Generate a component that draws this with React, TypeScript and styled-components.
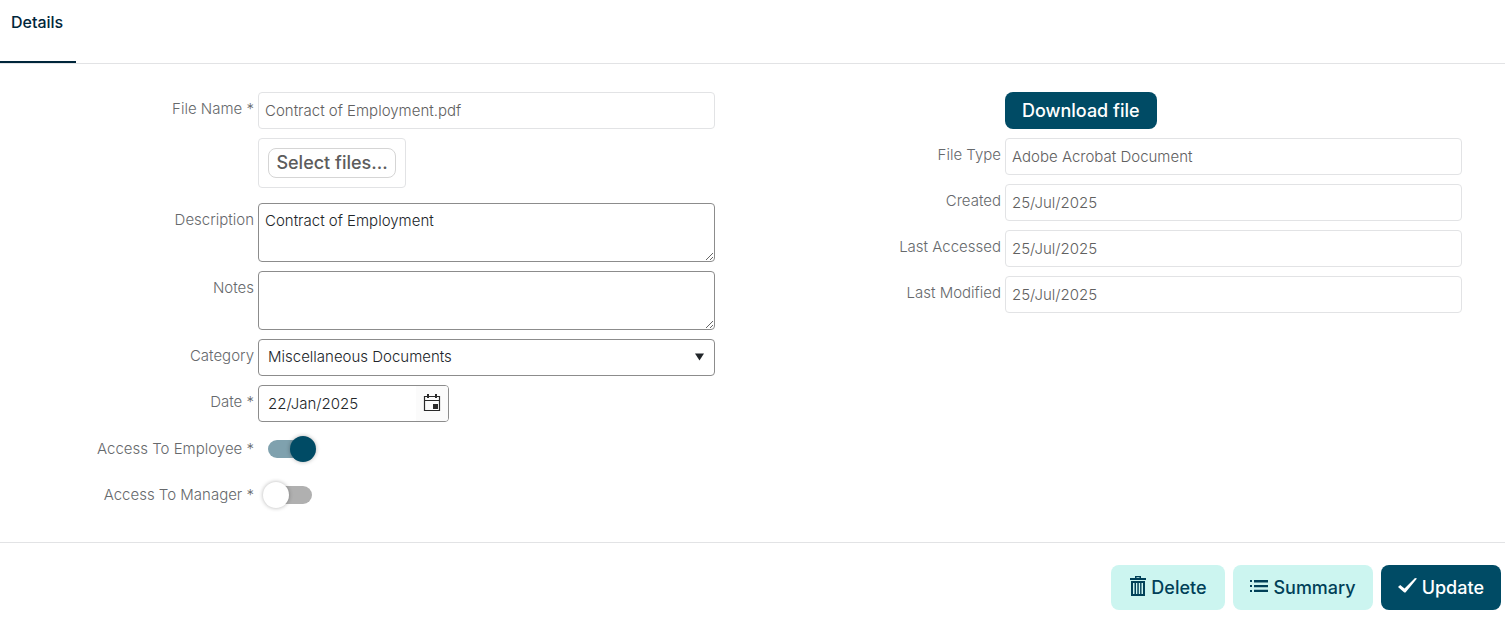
import React from "react";
import styled, { createGlobalStyle, css } from "styled-components";

const GlobalStyle = createGlobalStyle`
  *, *::before, *::after { box-sizing: border-box; }
  body {
    margin: 0;
    background: #fff;
    color: #212529;
    font-family: Inter, "Open Sans", sans-serif;
    font-size: 16px;
    font-weight: 300;
  }
  button, input, select, textarea { font: inherit; color: inherit; margin: 0; }
`;

const Page = styled.div`
  padding-right: 4px;
`;

const TabBar = styled.nav`
  display: flex;
  height: 64px;
  border-bottom: 1px solid #e2e3e5;
`;

const Tab = styled.a`
  width: 76px;
  padding: 12px 0 0 11px;
  border-bottom: 2px solid #00263a;
  color: #00263a;
  font-size: 16px;
  font-weight: 500;
  line-height: 20px;
  text-decoration: none;
`;

const Form = styled.form`
  margin: 0;
`;

const Columns = styled.div`
  display: grid;
  grid-template-columns: 1fr 1fr;
  align-items: start;
  padding: 28px 11px 27px 0;
`;

const Column = styled.div`
  display: flex;
  flex-direction: column;
  gap: 9px;
`;

const Row = styled.div`
  display: grid;
  grid-template-columns: 254fr 457fr;
  column-gap: 4px;
  align-items: start;
  min-height: 37px;
  padding-right: 32px;
`;

const Label = styled.label`
  padding-top: 6px;
  color: #66696c;
  font-size: 15px;
  line-height: 22px;
  text-align: right;
`;

const Control = styled.div`
  grid-column: 2;
  display: flex;
`;

const box = css`
  width: 100%;
  border: 1px solid #8c8c8c;
  border-radius: 4px;
  background: #fff;
  outline: none;
`;

const ReadOnlyInput = styled.input`
  ${box}
  height: 37px;
  padding: 0 6px 1px;
  border-color: #e2e3e5;
  color: #606060;
  font-size: 15px;
`;

const TextArea = styled.textarea`
  ${box}
  display: block;
  height: 59px;
  padding: 6px;
  font-size: 15px;
  line-height: 22px;
  resize: vertical;
`;

const UploadBox = styled.div`
  height: 50px;
  margin-bottom: 6px;
  padding: 9px;
  border: 1px solid #e2e3e5;
  border-radius: 4px;
`;

const SelectFiles = styled.button`
  display: block;
  width: 128px;
  height: 30px;
  padding: 0;
  border: 1px solid #d5d5d5;
  border-radius: 8px;
  background: #fff;
  color: #5c5c5c;
  font-size: 18px;
  font-weight: 500;
  line-height: 28px;
`;

const SelectWrap = styled.div`
  position: relative;
  width: 100%;

  svg {
    position: absolute;
    top: 14px;
    right: 11px;
    pointer-events: none;
  }
`;

const Select = styled.select`
  ${box}
  display: block;
  height: 37px;
  padding: 0 9px 2px;
  appearance: none;
  font-size: 15px;
`;

const DateBox = styled.div`
  ${box}
  display: flex;
  width: 191px;
  height: 37px;
  margin-bottom: 1px;
  overflow: hidden;
`;

const DateInput = styled.input`
  flex: 1;
  min-width: 0;
  padding: 0 9px;
  border: 0;
  background: transparent;
  font-size: 15px;
  outline: none;
`;

const CalendarButton = styled.button`
  display: flex;
  align-items: center;
  justify-content: center;
  width: 32px;
  padding: 0 0 2px;
  border: 0;
  background: #fbfbfb;
`;

const Switch = styled.input`
  position: relative;
  width: 44px;
  height: 18px;
  margin: 8px 0 0 10px;
  border-radius: 9px;
  background: #b0b0b0;
  appearance: none;

  &::before {
    content: "";
    position: absolute;
    top: -4px;
    left: -5px;
    width: 26px;
    height: 26px;
    border-radius: 50%;
    background: #fff;
    box-shadow: 0 0 4px rgba(0, 0, 0, 0.3);
  }

  &:checked { background: #7fa1ae; }
  &:checked::before { left: 22px; background: #004b65; }
`;

const Button = styled.button<{ $tone: "solid" | "soft"; $compact?: boolean }>`
  display: flex;
  align-items: center;
  justify-content: center;
  gap: 5px;
  min-width: 114px;
  height: ${(p) => (p.$compact ? 37 : 45)}px;
  padding: 0 17px;
  border: 0;
  border-radius: 8px;
  background: ${(p) => (p.$tone === "solid" ? "#004b65" : "#ccf5f0")};
  color: ${(p) => (p.$tone === "solid" ? "#fff" : "#004058")};
  font-size: 18px;
  font-weight: 500;
  line-height: 24px;
  white-space: nowrap;

  svg { margin-bottom: 4px; }
`;

const Footer = styled.footer`
  display: flex;
  justify-content: flex-end;
  gap: 8px;
  padding: 22px 4px 8px;
  border-top: 1px solid #e2e3e5;
`;

const CalendarIcon = () => (
  <svg width="18" height="18" viewBox="0 0 18 18" aria-hidden="true">
    <path d="M1.5 2.5h15v14h-15zM1.5 6.5h15" fill="none" stroke="#292929" strokeWidth="1.2" />
    <path d="M4 0h2v4H4zM12 0h2v4h-2zM10 10h5v5h-5z" fill="#292929" />
  </svg>
);

const TrashIcon = () => (
  <svg width="16" height="20" viewBox="0 0 16 20" fill="currentColor" aria-hidden="true">
    <path
      fillRule="evenodd"
      d="M5 2V0h6v2h5v2H0V2zM6.500 1.200V2h3v-.8zM1 5h14v15H1zM3 7v11h1.500V7zM6 7v11h1.300V7zM8.800 7v11h1.300V7zM11.500 7v11H13V7z"
    />
  </svg>
);

const ListIcon = () => (
  <svg width="18" height="12" viewBox="0 0 18 12" fill="currentColor" aria-hidden="true">
    <path d="M0 0h2v2H0zM4 0h14v2.500H4zM0 5h2v2H0zM4 5h14v2.200H4zM0 10h2v2H0zM4 9.700h14V12H4z" />
  </svg>
);

const CheckIcon = () => (
  <svg width="19" height="15" viewBox="0 0 19 15" fill="currentColor" aria-hidden="true">
    <path d="M0 9l2.200-2 4.300 3.500L17 0l2 .6L7.500 14.600h-1.200z" />
  </svg>
);

const details = [
  { id: "fileType", label: "File Type", value: "Adobe Acrobat Document" },
  { id: "created", label: "Created", value: "25/Jul/2025" },
  { id: "lastAccessed", label: "Last Accessed", value: "25/Jul/2025" },
  { id: "lastModified", label: "Last Modified", value: "25/Jul/2025" },
];

export default function App() {
  return (
    <Page>
      <GlobalStyle />
      <TabBar>
        <Tab href="#details">Details</Tab>
      </TabBar>
      <Form onSubmit={(e) => e.preventDefault()}>
        <Columns>
          <Column>
            <Row>
              <Label htmlFor="fileName">File Name *</Label>
              <Control>
                <ReadOnlyInput id="fileName" readOnly value="Contract of Employment.pdf" />
              </Control>
            </Row>
            <Row>
              <Control>
                <UploadBox>
                  <SelectFiles type="button">Select files...</SelectFiles>
                </UploadBox>
              </Control>
            </Row>
            <Row>
              <Label htmlFor="description">Description</Label>
              <Control>
                <TextArea id="description" defaultValue="Contract of Employment" />
              </Control>
            </Row>
            <Row>
              <Label htmlFor="notes">Notes</Label>
              <Control>
                <TextArea id="notes" />
              </Control>
            </Row>
            <Row>
              <Label htmlFor="category">Category</Label>
              <Control>
                <SelectWrap>
                  <Select id="category">
                    <option>Miscellaneous Documents</option>
                  </Select>
                  <svg width="9" height="8" viewBox="0 0 9 8" aria-hidden="true">
                    <path d="M0 0.500h9L4.500 7.500z" fill="#212529" />
                  </svg>
                </SelectWrap>
              </Control>
            </Row>
            <Row>
              <Label htmlFor="date">Date *</Label>
              <Control>
                <DateBox>
                  <DateInput id="date" defaultValue="22/Jan/2025" />
                  <CalendarButton type="button" aria-label="Open calendar">
                    <CalendarIcon />
                  </CalendarButton>
                </DateBox>
              </Control>
            </Row>
            <Row>
              <Label htmlFor="accessEmployee">Access To Employee *</Label>
              <Control>
                <Switch id="accessEmployee" type="checkbox" defaultChecked />
              </Control>
            </Row>
            <Row>
              <Label htmlFor="accessManager">Access To Manager *</Label>
              <Control>
                <Switch id="accessManager" type="checkbox" />
              </Control>
            </Row>
          </Column>
          <Column>
            <Row>
              <Control>
                <Button type="button" $tone="solid" $compact>
                  Download file
                </Button>
              </Control>
            </Row>
            {details.map((d) => (
              <Row key={d.id}>
                <Label htmlFor={d.id}>{d.label}</Label>
                <Control>
                  <ReadOnlyInput id={d.id} readOnly value={d.value} />
                </Control>
              </Row>
            ))}
          </Column>
        </Columns>
        <Footer>
          <Button type="button" $tone="soft">
            <TrashIcon />
            Delete
          </Button>
          <Button type="button" $tone="soft">
            <ListIcon />
            Summary
          </Button>
          <Button type="submit" $tone="solid">
            <CheckIcon />
            Update
          </Button>
        </Footer>
      </Form>
    </Page>
  );
}
